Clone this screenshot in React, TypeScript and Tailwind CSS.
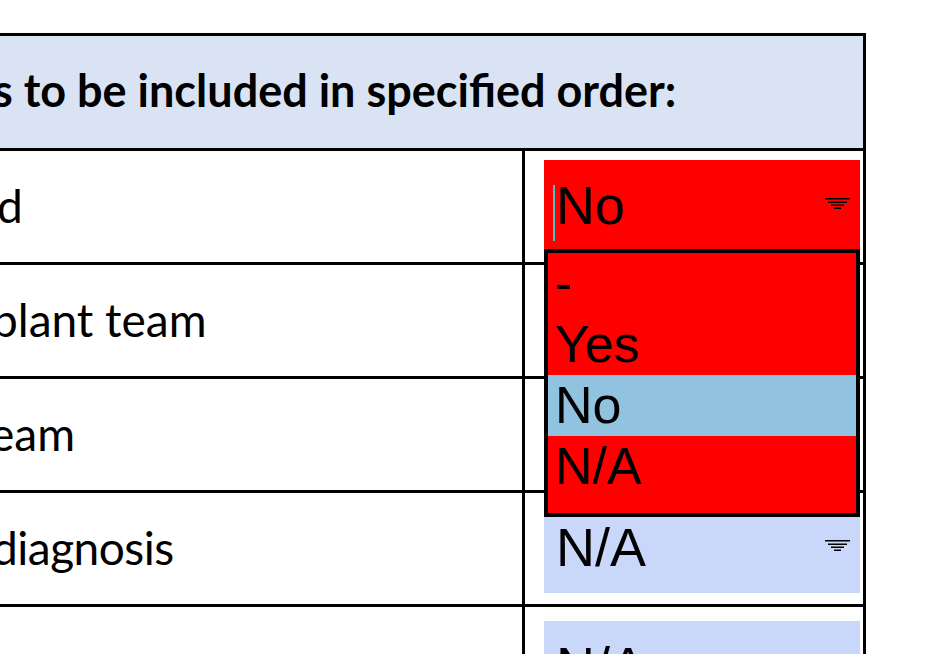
import type { ReactNode } from "react";

type Tone = "red" | "blue";

type Row = {
  label: string;
  shift: string;
  value: string;
  tone: Tone;
  open?: boolean;
  top?: string;
};

const ROWS: Row[] = [
  { label: "d", shift: "-ml-[3px]", value: "No", tone: "red", open: true },
  { label: "plant team", shift: "-ml-[8px]", value: "No", tone: "red" },
  { label: "eam", shift: "-ml-[10px]", value: "No", tone: "red" },
  { label: "diagnosis", shift: "-ml-[8px] tracking-[-0.5px]", value: "N/A", tone: "blue" },
  { label: "", shift: "", value: "N/A", tone: "blue", top: "pt-[14px]" },
];

const TONES: Record<Tone, string> = {
  red: "bg-[#ff0000]",
  blue: "bg-[#c9d7fb]",
};

const OPTIONS = ["-", "Yes", "No", "N/A"];

function Arrow() {
  return (
    <svg width="25" height="12" viewBox="0 0 25 12" className="ml-auto mt-[38px] shrink-0 text-black">
      <path d="M0 0.75H25M3 4.25H22M6 7.25H19M9 10.25H16" stroke="currentColor" strokeWidth="1.5" />
    </svg>
  );
}

function Select({ row, children }: { row: Row; children?: ReactNode }) {
  return (
    <div
      className={`relative flex h-[91px] w-[316px] items-start pl-[12px] pr-[10px] font-['Liberation_Sans',Arial,sans-serif] text-[54px] text-black ${TONES[row.tone]}`}
    >
      {row.open ? <span className="absolute left-[9px] top-[25px] h-[56px] w-[2px] bg-[#3fc6cf]" /> : null}
      <span className="pt-[5px]">{row.value}</span>
      <Arrow />
      {children}
    </div>
  );
}

function OptionList({ selected }: { selected: string }) {
  return (
    <div className="absolute left-0 top-[89px] z-10 flex w-[316px] flex-col border-[4px] border-black bg-[#ff0000] pb-[16px] text-[52px]">
      {OPTIONS.map((option) => (
        <div
          key={option}
          className={`h-[61px] pl-[7px] leading-[61px] ${option === selected ? "bg-[#91c2e0]" : ""}`}
        >
          {option}
        </div>
      ))}
    </div>
  );
}

export default function App() {
  return (
    <div className="h-[654px] w-[927px] overflow-hidden bg-white pt-[33px] font-['Lato',sans-serif] text-black">
      <div className="flex w-[866px] flex-col border-r-[3px] border-t-[3px] border-black">
        <div className="h-[115px] border-b-[3px] border-black bg-[#dae3f3] pt-[21px]">
          <p className="-ml-[7px] whitespace-nowrap text-[45px] font-bold">s to be included in specified order:</p>
        </div>

        {ROWS.map((row, i) => (
          <div key={i} className="grid h-[114px] shrink-0 grid-cols-[525px_1fr] border-b-[3px] border-black">
            <div className="border-r-[3px] border-black pt-[20px]">
              <p className={`whitespace-nowrap text-[46px] ${row.shift}`}>{row.label}</p>
            </div>
            <div className={`pl-[19px] ${row.top ?? "pt-[9px]"}`}>
              <Select row={row}>{row.open ? <OptionList selected={row.value} /> : null}</Select>
            </div>
          </div>
        ))}
      </div>
    </div>
  );
}
